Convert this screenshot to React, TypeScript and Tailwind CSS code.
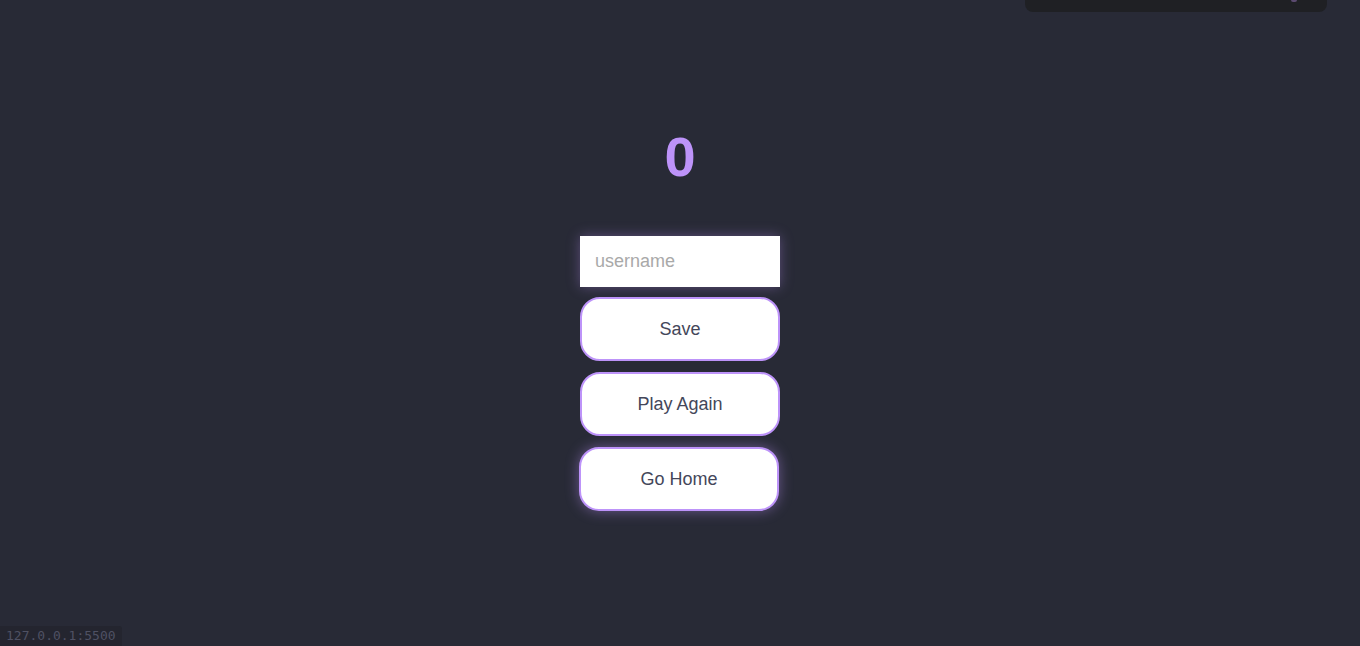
import React from "react";

function App() {
  return (
    <div className="relative min-h-[646px] w-full overflow-hidden bg-[#282a36] font-['Liberation_Sans',Arial,sans-serif]">
      {/* overlay panel top-right */}
      <div className="absolute right-[33px] top-0 h-[12px] w-[302px] rounded-b-[8px] bg-[#1f2024]">
        <div className="absolute right-[30px] top-0 h-[2px] w-[6px] rounded-b-full bg-[#5b4a70]" />
      </div>

      <div className="flex flex-col items-center pt-[129px]">
        <div className="text-[56px] font-bold leading-none text-[#bd93f9]">0</div>

        <div className="mt-[51px] flex w-[200px] flex-col gap-[10px]">
          <input
            type="text"
            placeholder="username"
            className="h-[51px] w-[200px] bg-white px-[15px] text-[18px] text-[#44475a] shadow-[0_0_12px_rgba(189,147,249,0.35)] outline-none placeholder:text-[#a9a9a9]"
          />
          <div className="flex flex-col gap-[11px]">
            <button className="h-[64px] w-[200px] rounded-[20px] border-2 border-[#bd93f9] bg-white text-[18px] text-[#44475a]">
              Save
            </button>
            <button className="h-[64px] w-[200px] rounded-[20px] border-2 border-[#bd93f9] bg-white text-[18px] text-[#44475a]">
              Play Again
            </button>
            <button className="-ml-px h-[64px] w-[200px] rounded-[20px] border-2 border-[#bd93f9] bg-white text-[18px] text-[#44475a] shadow-[0_0_14px_rgba(189,147,249,0.45)]">
              Go Home
            </button>
          </div>
        </div>
      </div>

      {/* status bar bottom-left */}
      <div className="absolute bottom-0 left-0 h-[20px] w-[122px] rounded-tr-[3px] bg-[#24252f] px-[6px] font-['DejaVu_Sans_Mono',monospace] text-[13px] leading-[20px] text-[#4f5163]">
        127.0.0.1:5500
      </div>
    </div>
  );
}

export default App;
